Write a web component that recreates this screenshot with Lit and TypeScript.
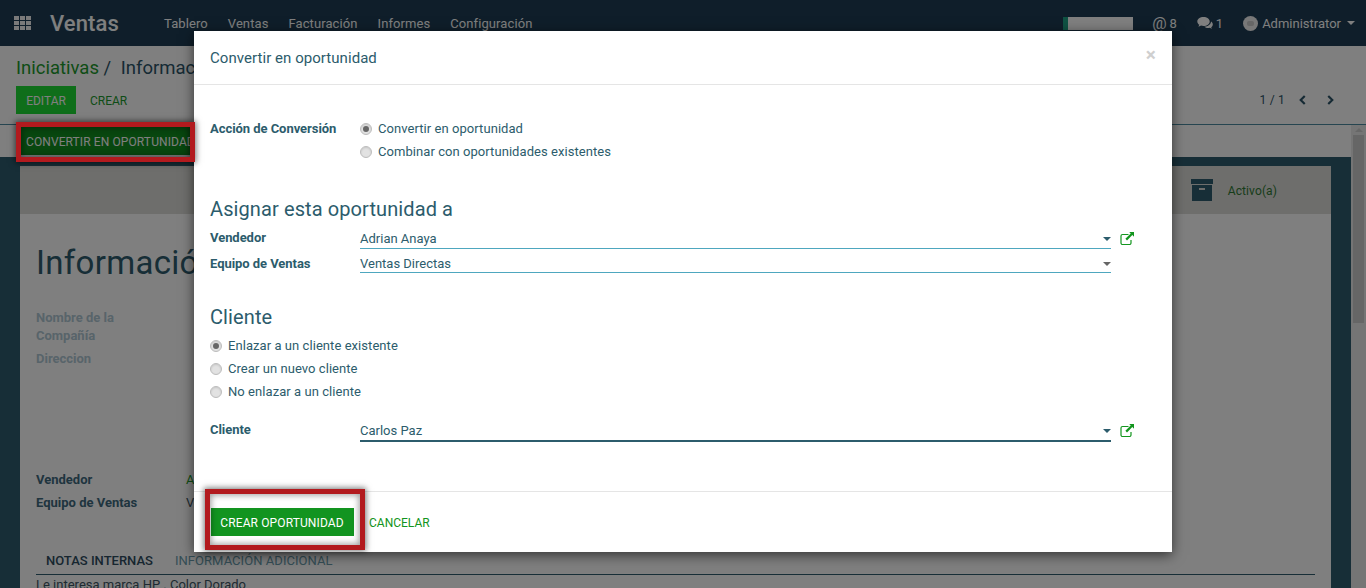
import { LitElement, html, css } from "lit";
import { customElement } from "lit/decorators.js";

const caret = html`<svg class="caret" viewBox="0 0 8 4" width="8" height="4"><path d="M0 0h8L4 4z" fill="currentColor"/></svg>`;
const ext = html`<svg class="ext" viewBox="0 0 14 13" width="14" height="13"><path d="M8.500 2.500H2.500A1.500 1.500 0 0 0 1 4v7A1.500 1.500 0 0 0 2.500 12.500h7A1.500 1.500 0 0 0 11 11V8" fill="none" stroke="#13961f" stroke-width="1.200"/><path d="M9.200 0H14V4.800L12.300 3.100 7 8.400 5.400 6.800 10.700 1.500z" fill="#13961f"/></svg>`;

@customElement("app-root")
export class AppRoot extends LitElement {
  static styles = css`
    :host { display: block; width: 1366px; height: 588px; position: relative; overflow: hidden; font-family: Roboto, "Liberation Sans", sans-serif; font-size: 13px; color: #2c5c6c; background: #fff; }
    * { box-sizing: border-box; }
    .page { display: flex; flex-direction: column; height: 588px; }
    .nav { height: 46px; flex: none; background: #1e3d54; color: #fff; display: flex; align-items: center; padding: 0 11px 0 14px; }
    .apps { display: grid; grid-template-columns: repeat(3, 5px); grid-auto-rows: 4px; gap: 1px; margin-right: 19px; }
    .apps i { background: #f4f4f4; display: block; }
    .brand { font-size: 22px; font-weight: 500; width: 114px; letter-spacing: 0.1px; }
    .menu { display: flex; gap: 20px; font-size: 13px; letter-spacing: 0.09px; }
    .right { margin-left: auto; display: flex; align-items: center; }
    .prog { width: 70px; height: 13px; background: #fff; border-left: 5px solid #1ea586; margin-right: 19px; }
    .at { font-size: 16px; margin-right: 3px; }
    .cnt { margin-right: 20px; }
    .cnt.last { margin-right: 10px; }
    .bub { margin-right: 3px; }
    .avatar { width: 15px; height: 15px; border-radius: 50%; background: #f0f0f0; margin: 0 4px 0 10px; display: flex; align-items: center; justify-content: center; }
    .avatar i { width: 7px; height: 5px; background: #ccc; border-radius: 2px; }
    .user .caret { margin-left: 6px; }
    .user { display: flex; align-items: center; }

    .panel { height: 79px; flex: none; border-bottom: 1px solid #4c8aa0; padding: 11px 16px 0; }
    .crumb { font-size: 18.500px; line-height: 22px; white-space: nowrap; color: #2c5468; }
    .crumb a { color: #1c9a2c; }
    .crumb b { font-weight: 400; margin-left: 5px; }
    .acts { display: flex; align-items: center; margin-top: 7px; height: 28px; font-size: 12px; }
    .edit { color: #fff; width: 60px; height: 28px; padding-top: 1px; display: flex; align-items: center; justify-content: center; background: #1edc34; }
    .crear { color: #1c9a2c; margin-left: 14px; padding-top: 1px; }
    .pager { margin-left: auto; display: flex; align-items: center; color: #2c5468; margin-right: 15px; letter-spacing: 0.2px; }
    .pager svg { margin-left: 19px; }
    .pager svg:first-of-type { margin-left: 13px; }

    .main { flex: 1; display: flex; min-height: 0; }
    .scroll { flex: 1; min-width: 0; display: flex; flex-direction: column; overflow: hidden; }
    .status { height: 32px; flex: none; padding: 2px 0 0 20px; }
    .conv { width: 170px; height: 28px; background: #118e1f; color: #fff; font-size: 12px; padding: 2px 0 0 6px; letter-spacing: 0.1px; display: flex; align-items: center; white-space: nowrap; overflow: hidden; }
    .well { flex: 1; background: #2e5c6e; padding: 9px 20px 0; min-height: 0; }
    .sheet { background: #fff; height: 460px; }
    .sbar { height: 48px; background: #dddcd8; display: flex; justify-content: flex-end; align-items: center; padding: 1px 54px 0 0; color: #2f7a35; font-size: 12px; letter-spacing: 0.1px; }
    .arch { margin: -1px 15px 0 0; }
    .form { padding: 0 16px; }
    h1 { font-size: 33px; font-weight: 400; margin: 29px 0 0; line-height: 40px; color: #2e5c6e; letter-spacing: 0.3px; white-space: nowrap; }
    .dim { color: #b0c8d4; font-weight: 700; line-height: 18px; }
    .dim.a { margin-top: 26px; width: 110px; }
    .dim.b { margin-top: 5px; }
    .kv { display: grid; grid-template-columns: 150px 1fr; grid-auto-rows: 23px; margin-top: 100px; align-items: center; }
    .kv b { color: #3e6a7e; }
    .kv span { color: #1c9a2c; }
    .kv span.plain { color: #3c5464; }
    .tabs { display: flex; margin: 39px 0 0; padding-left: 10px; gap: 22px; border-bottom: 1px solid #2e5c6e; height: 22px; font-size: 13px; }
    .tabs b { font-weight: 500; color: #2e4c60; }
    .tabs span { color: #6a9cac; letter-spacing: 0.05px; }
    .note { margin-top: 2px; font-size: 13px; color: #3c5464; white-space: nowrap; }

    .track { width: 15px; flex: none; background: #eaeaea; padding: 3px 2px 0; }
    .track svg { display: block; margin: 0 auto 3px; }
    .thumb { width: 11px; height: 188px; background: #cccccc; }

    .scrim { position: absolute; inset: 0; background: rgba(0,0,0,.5); }
    .modal { position: absolute; left: 194px; top: 31px; width: 978px; height: 521px; background: #fff; box-shadow: 0 3px 12px rgba(0,0,0,.6); display: flex; flex-direction: column; }
    .mh { height: 54px; flex: none; border-bottom: 1px solid #e5e5e5; padding: 0 16px; display: flex; align-items: center; justify-content: space-between; font-size: 15px; color: #2c5c6c; letter-spacing: 0.05px; }
    .x { font-size: 19px; font-weight: 700; color: #cfcfcf; margin: -7px 0 0 0; line-height: 1; }
    .mb { flex: 1; padding: 32px 16px 0; }
    .row { display: grid; grid-template-columns: 150px 1fr; }
    .lbl { font-weight: 700; letter-spacing: -0.05px; }
    .lbl.one { line-height: 23px; }
    .lbl.p1 { padding-top: 1px; }
    .lbl.p3 { padding-top: 3px; }
    .opts { display: flex; flex-direction: column; letter-spacing: 0.06px; }
    .opt { height: 23px; display: flex; align-items: center; gap: 6px; }
    .radio { width: 12px; height: 12px; border-radius: 50%; background: #e2e2e2; border: 1px solid #bdbdbd; box-shadow: inset 0 1px 2px rgba(0,0,0,.12); display: flex; align-items: center; justify-content: center; flex: none; }
    .radio.on::after { content: ""; width: 6px; height: 6px; border-radius: 50%; background: #666; }
    h3 { font-size: 20px; font-weight: 400; line-height: 28px; margin: 0; color: #2c5c6c; letter-spacing: 0.1px; }
    h3.first { margin-top: 32px; }
    h3.second { margin-top: 30px; }
    .f { display: grid; grid-template-columns: 150px 751px auto; align-items: start; height: 20px; margin-top: 6px; }
    .f + .f { margin-top: 4px; }
    .inp { height: 20px; border-bottom: 1px solid #4ea7bf; display: flex; align-items: center; justify-content: space-between; color: #2c5c6c; }
    .inp .caret { color: #2c5c6c; margin-top: 1px; }
    .inp.g { padding-top: 1px; }
    .inp.g .caret { color: #666; }
    .inp.dark { height: 21px; border-bottom: 2px solid #2c5c6c; }
    .ext { margin: 3px 0 0 9px; display: block; }
    .cl { margin-top: 3px; }
    .cf { margin-top: 18px; }
    .mf { height: 61px; flex: none; border-top: 1px solid #e5e5e5; padding: 16px 0 0 17px; display: flex; align-items: flex-start; font-size: 12px; }
    .go { width: 143px; height: 28px; padding: 2px 1px 0 0; letter-spacing: 0.12px; background: #129420; color: #fff; display: flex; align-items: center; justify-content: center; }
    .cancel { color: #129420; height: 28px; padding-top: 2px; display: flex; align-items: center; margin-left: 15px; }

    .mark { position: absolute; border: 5px solid #b21a1e; box-shadow: 0 0 6px 1px rgba(0,0,0,.55), inset 0 0 6px 1px rgba(0,0,0,.4); }
    .m1 { left: 16px; top: 122px; width: 179px; height: 40px; }
    .m2 { left: 205px; top: 489px; width: 160px; height: 61px; }
  `;

  render() {
    return html`
      <div class="page">
        <header class="nav">
          <div class="apps">${Array.from({ length: 9 }, () => html`<i></i>`)}</div>
          <div class="brand">Ventas</div>
          <nav class="menu"><span>Tablero</span><span>Ventas</span><span>Facturación</span><span>Informes</span><span>Configuración</span></nav>
          <div class="right">
            <div class="prog"></div>
            <span class="at">@</span><span class="cnt">8</span>
            <svg class="bub" viewBox="0 0 16 14" width="16" height="14"><path d="M6.500 1C3 1 .3 3 .3 5.400c0 1.300.8 2.500 2 3.300-.2.7-.6 1.300-1.100 1.800 1 0 2-.4 2.800-1 .8.3 1.600.4 2.500.4 3.500 0 6.200-2 6.200-4.500S10 1 6.500 1z" fill="#fff"/><path d="M14 5.500c0 2.900-3 5-6.600 5.200 1 .9 2.300 1.300 3.700 1.300.6 0 1.200-.1 1.700-.2.600.5 1.300.8 2.200.9-.4-.4-.7-1-.8-1.500 1-.7 1.600-1.700 1.600-2.800 0-1.100-.7-2.200-1.800-2.900z" fill="#fff"/></svg>
            <span class="cnt last">1</span>
            <div class="user"><span class="avatar"><i></i></span>Administrator${caret}</div>
          </div>
        </header>
        <section class="panel">
          <div class="crumb"><a>Iniciativas</a> <span>/</span> <b>Información de Contacto</b></div>
          <div class="acts">
            <span class="edit">EDITAR</span><span class="crear">CREAR</span>
            <div class="pager">1 / 1
              <svg viewBox="0 0 10 12" width="9" height="12"><path d="M7.500 1.500 3 6l4.500 4.500" fill="none" stroke="#2c5468" stroke-width="2.400"/></svg>
              <svg viewBox="0 0 10 12" width="9" height="12"><path d="M2.500 1.500 7 6l-4.500 4.500" fill="none" stroke="#2c5468" stroke-width="2.400"/></svg>
            </div>
          </div>
        </section>
        <div class="main">
          <div class="scroll">
            <div class="status"><div class="conv">CONVERTIR EN OPORTUNIDAD</div></div>
            <div class="well">
              <div class="sheet">
                <div class="sbar">
                  <svg class="arch" viewBox="0 0 22 22" width="22" height="22"><path d="M0 0h22v5H0z" fill="#2e5c6e"/><path d="M1 6h20v16H1z" fill="#2e5c6e"/><path d="M8 9h6v2H8z" fill="#dddcd8"/></svg>
                  <span>Activo(a)</span>
                </div>
                <div class="form">
                  <h1>Información de Contacto</h1>
                  <div class="dim a">Nombre de la Compañía</div>
                  <div class="dim b">Direccion</div>
                  <div class="kv"><b>Vendedor</b><span>Adrian Anaya</span><b>Equipo de Ventas</b><span class="plain">Ventas Directas</span></div>
                  <div class="tabs"><b>NOTAS INTERNAS</b><span>INFORMACIÓN ADICIONAL</span></div>
                  <div class="note">Le interesa marca HP . Color Dorado</div>
                </div>
              </div>
            </div>
          </div>
          <div class="track">
            <svg viewBox="0 0 8 4" width="8" height="4"><path d="M4 0l4 4H0z" fill="#cfcfcf"/></svg>
            <div class="thumb"></div>
          </div>
        </div>
      </div>

      <div class="scrim"></div>

      <div class="modal">
        <div class="mh"><span>Convertir en oportunidad</span><span class="x">×</span></div>
        <div class="mb">
          <div class="row">
            <div class="lbl one">Acción de Conversión</div>
            <div class="opts">
              <div class="opt"><span class="radio on"></span>Convertir en oportunidad</div>
              <div class="opt"><span class="radio"></span>Combinar con oportunidades existentes</div>
            </div>
          </div>
          <h3 class="first">Asignar esta oportunidad a</h3>
          <div class="f"><div class="lbl p1">Vendedor</div><div class="inp"><span>Adrian Anaya</span>${caret}</div>${ext}</div>
          <div class="f"><div class="lbl p3">Equipo de Ventas</div><div class="inp g"><span>Ventas Directas</span>${caret}</div></div>
          <h3 class="second">Cliente</h3>
          <div class="opts cl">
            <div class="opt"><span class="radio on"></span>Enlazar a un cliente existente</div>
            <div class="opt"><span class="radio"></span>Crear un nuevo cliente</div>
            <div class="opt"><span class="radio"></span>No enlazar a un cliente</div>
          </div>
          <div class="f cf"><div class="lbl p1">Cliente</div><div class="inp dark"><span>Carlos Paz</span>${caret}</div>${ext}</div>
        </div>
        <div class="mf"><span class="go">CREAR OPORTUNIDAD</span><span class="cancel">CANCELAR</span></div>
      </div>

      <div class="mark m1"></div>
      <div class="mark m2"></div>
    `;
  }
}
